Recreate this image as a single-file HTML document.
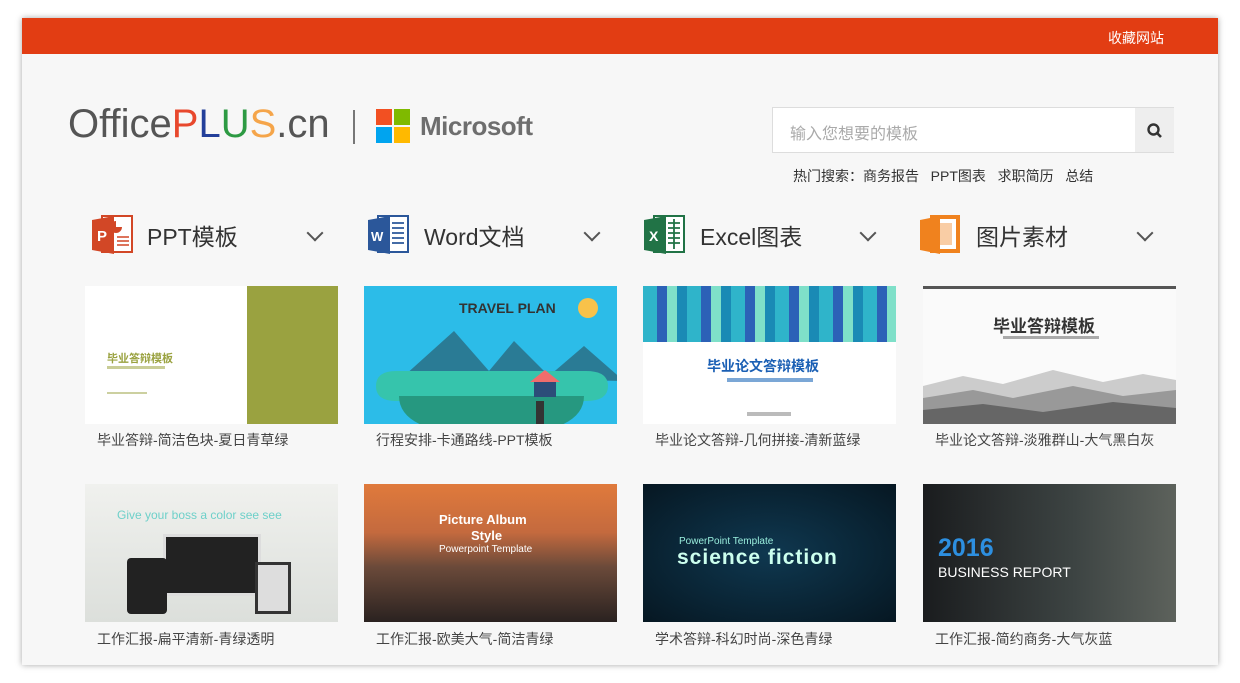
<!DOCTYPE html>
<html><head><meta charset="utf-8"><style>
*{margin:0;padding:0;box-sizing:border-box}
body{width:1240px;height:683px;background:#fff;font-family:"Liberation Sans","Noto Sans CJK SC",sans-serif;position:relative;overflow:hidden}
.card{position:absolute;left:22px;top:18px;width:1196px;height:647px;background:#f7f7f7;box-shadow:0 0 6px rgba(0,0,0,.35)}
.top{position:absolute;left:22px;top:18px;width:1196px;height:36px;background:#e23d13}
.top span{position:absolute;right:54px;top:10px;color:#fff;font-size:14px}
.a{position:absolute}
.th{position:absolute;width:253px;height:138px;overflow:hidden}
.cap{position:absolute;font-size:14px;color:#444;white-space:nowrap}
.nav{position:absolute;font-size:23px;color:#333}
.chev{position:absolute;width:12px;height:12px;border-right:2px solid #555;border-bottom:2px solid #555;transform:rotate(45deg)}
</style></head><body>
<div class="card"></div>
<div class="top"><span>收藏网站</span></div>

<div class="a" style="left:68px;top:102px;font-size:40px;color:#555;font-family:'Liberation Sans',sans-serif">Office<span style="color:#e8482d">P</span><span style="color:#233f9a">L</span><span style="color:#2d9a43">U</span><span style="color:#f5a54a">S</span>.cn</div>
<div class="a" style="left:353px;top:110px;width:2px;height:34px;background:#777"></div>
<div class="a" style="left:376px;top:109px;width:16px;height:16px;background:#f25022"></div>
<div class="a" style="left:394px;top:109px;width:16px;height:16px;background:#7fba00"></div>
<div class="a" style="left:376px;top:127px;width:16px;height:16px;background:#00a4ef"></div>
<div class="a" style="left:394px;top:127px;width:16px;height:16px;background:#ffb900"></div>
<div class="a" style="left:420px;top:111px;font-size:26px;color:#6e6e6e;font-weight:bold;letter-spacing:-0.5px">Microsoft</div>

<div class="a" style="left:772px;top:107px;width:402px;height:46px;background:#fff;border:1px solid #ddd"></div>
<div class="a" style="left:790px;top:120px;font-size:16px;color:#aaa">输入您想要的模板</div>
<div class="a" style="left:1135px;top:108px;width:39px;height:44px;background:#eee"></div>
<svg class="a" style="left:1146px;top:122px" width="18" height="18" viewBox="0 0 18 18"><circle cx="7.5" cy="7.5" r="5" fill="none" stroke="#333" stroke-width="2.4"/><path d="M11 11l4 4" stroke="#333" stroke-width="2.6"/></svg>
<div class="a" style="left:793px;top:166px;font-size:14px;color:#333;white-space:nowrap">热门搜索：商务报告&nbsp;&nbsp; PPT图表&nbsp;&nbsp; 求职简历&nbsp;&nbsp; 总结</div>

<svg class="a" style="left:90px;top:213px" width="44" height="44" viewBox="0 0 44 44"><rect x="12" y="3" width="30" height="36" fill="#fff" stroke="#d24726" stroke-width="2"/><path d="M26 8a6 6 0 1 0 6 6h-6z" fill="#d24726"/><path d="M27 24h12M27 28h12M27 32h12" stroke="#d24726" stroke-width="1.5"/><path d="M2 7l22-4v38l-22-4z" fill="#d24726"/><text x="7" y="28" font-size="15" font-weight="bold" fill="#fff" font-family="Liberation Sans">P</text></svg>
<div class="nav" style="left:147px;top:218px">PPT模板</div>
<div class="chev" style="left:309px;top:227px"></div>

<svg class="a" style="left:366px;top:213px" width="44" height="44" viewBox="0 0 44 44"><rect x="12" y="3" width="30" height="36" fill="#fff" stroke="#2b579a" stroke-width="2"/><path d="M26 10h12M26 15h12M26 20h12M26 25h12M26 30h12" stroke="#2b579a" stroke-width="1.8"/><path d="M2 7l22-4v38l-22-4z" fill="#2b579a"/><text x="5" y="28" font-size="13" font-weight="bold" fill="#fff" font-family="Liberation Sans">W</text></svg>
<div class="nav" style="left:424px;top:218px">Word文档</div>
<div class="chev" style="left:586px;top:227px"></div>

<svg class="a" style="left:642px;top:213px" width="44" height="44" viewBox="0 0 44 44"><rect x="12" y="3" width="30" height="36" fill="#fff" stroke="#217346" stroke-width="2"/><path d="M26 10h12M26 15h12M26 20h12M26 25h12M26 30h12M32 6v30" stroke="#217346" stroke-width="1.8"/><path d="M2 7l22-4v38l-22-4z" fill="#217346"/><text x="7" y="28" font-size="14" font-weight="bold" fill="#fff" font-family="Liberation Sans">X</text></svg>
<div class="nav" style="left:700px;top:218px">Excel图表</div>
<div class="chev" style="left:862px;top:227px"></div>

<svg class="a" style="left:918px;top:213px" width="44" height="44" viewBox="0 0 44 44"><rect x="14" y="4" width="26" height="34" fill="#fff" stroke="#f0821e" stroke-width="4"/><path d="M2 7l20-4v38l-20-4z" fill="#f0821e"/><rect x="18" y="10" width="16" height="22" fill="#f0821e" opacity=".4"/></svg>
<div class="nav" style="left:976px;top:218px">图片素材</div>
<div class="chev" style="left:1139px;top:227px"></div>

<div class="th" style="left:85px;top:286px;background:#fff"><div class="a" style="left:162px;top:0;width:91px;height:138px;background:#9aa240"></div><div class="a" style="left:22px;top:64px;font-size:11px;font-weight:bold;color:#9aa240">毕业答辩模板</div><div class="a" style="left:22px;top:80px;width:58px;height:3px;background:#c9cd96"></div><div class="a" style="left:22px;top:106px;width:40px;height:2px;background:#ccd0a0"></div></div>
<div class="th" style="left:364px;top:286px;background:#2cbce8">
<div class="a" style="left:95px;top:14px;font-size:14px;font-weight:bold;color:#333">TRAVEL PLAN</div>
<div class="a" style="left:214px;top:12px;width:20px;height:20px;border-radius:50%;background:#f8c24a"></div>
<svg class="a" style="left:0;top:40px" width="253" height="98"><path d="M40 50L90 5 125 45 150 15 185 50 220 20 260 55z" fill="#2a7b95"/><path d="M12 60q0-15 20-15h190q22 0 22 15t-22 15H32q-20 0-20-15z" fill="#36c4ac"/><path d="M35 70h185q0 20-25 30H60q-25-10-25-30z" fill="#269880"/><rect x="170" y="55" width="22" height="16" fill="#2c4d79"/><path d="M166 56l15-12 15 12z" fill="#f06c6c"/><rect x="172" y="75" width="8" height="25" fill="#333"/></svg>
</div>
<div class="th" style="left:643px;top:286px;background:#fff">
<div class="a" style="left:0;top:0;width:253px;height:56px;background:repeating-linear-gradient(90deg,#2fb4ca 0 14px,#2c61b7 14px 24px,#7fe0c9 24px 34px,#1a8ab5 34px 44px)"></div>
<div class="a" style="left:64px;top:70px;font-size:14px;font-weight:bold;color:#1a5fb4">毕业论文答辩模板</div>
<div class="a" style="left:84px;top:92px;width:86px;height:4px;background:#7ba7d6"></div>
<div class="a" style="left:104px;top:126px;width:44px;height:4px;background:#bbb"></div>
</div>
<div class="th" style="left:923px;top:286px;background:#fafafa">
<div class="a" style="left:0;top:0;width:253px;height:3px;background:#555"></div>
<div class="a" style="left:70px;top:26px;font-size:17px;font-weight:bold;color:#333">毕业答辩模板</div>
<div class="a" style="left:80px;top:50px;width:96px;height:3px;background:#aaa"></div>
<svg class="a" style="left:0;top:80px" width="253" height="58"><path d="M0 20l40-10 40 8 50-14 50 12 40-8 33 6v44H0z" fill="#ccc"/><path d="M0 32l50-8 40 8 60-12 50 10 53-6v34H0z" fill="#999"/><path d="M0 44l60-6 60 8 70-10 63 6v16H0z" fill="#666"/></svg>
</div>

<div class="cap" style="left:97px;top:430px">毕业答辩-简洁色块-夏日青草绿</div>
<div class="cap" style="left:376px;top:430px">行程安排-卡通路线-PPT模板</div>
<div class="cap" style="left:655px;top:430px">毕业论文答辩-几何拼接-清新蓝绿</div>
<div class="cap" style="left:935px;top:430px">毕业论文答辩-淡雅群山-大气黑白灰</div>

<div class="th" style="left:85px;top:484px;background:linear-gradient(#f0f1ee,#dcdfdb)">
<div class="a" style="left:32px;top:24px;font-size:12px;color:#6ed0c9">Give your boss a color see see</div>
<div class="a" style="left:78px;top:50px;width:98px;height:62px;background:#222;border:3px solid #ddd"></div>
<div class="a" style="left:42px;top:74px;width:40px;height:56px;background:#222;border-radius:4px"></div>
<div class="a" style="left:170px;top:78px;width:36px;height:52px;background:#ddd;border:3px solid #333"></div>
</div>
<div class="th" style="left:364px;top:484px;background:linear-gradient(#e07a3c 0%,#c46a3e 35%,#6b4a3a 60%,#2a2220 100%)">
<div class="a" style="left:75px;top:28px;font-size:13px;font-weight:bold;color:#fff">Picture Album</div>
<div class="a" style="left:107px;top:44px;font-size:13px;font-weight:bold;color:#fff">Style</div>
<div class="a" style="left:75px;top:60px;font-size:10px;color:#fff">Powerpoint Template</div>
</div>
<div class="th" style="left:643px;top:484px;background:radial-gradient(ellipse at 50% 50%,#0f3850,#061722)">
<div class="a" style="left:36px;top:52px;font-size:10px;color:#9ed">PowerPoint Template</div>
<div class="a" style="left:34px;top:62px;font-size:21px;font-weight:bold;color:#cfe;letter-spacing:1px">science fiction</div>
</div>
<div class="th" style="left:923px;top:484px;background:linear-gradient(90deg,#1a1c1e,#3d4443 60%,#5d625c)">
<div class="a" style="left:15px;top:50px;font-size:25px;font-weight:bold;color:#2d8fe0">2016</div>
<div class="a" style="left:15px;top:80px;font-size:14px;color:#fff">BUSINESS REPORT</div>
</div>

<div class="cap" style="left:97px;top:629px">工作汇报-扁平清新-青绿透明</div>
<div class="cap" style="left:376px;top:629px">工作汇报-欧美大气-简洁青绿</div>
<div class="cap" style="left:655px;top:629px">学术答辩-科幻时尚-深色青绿</div>
<div class="cap" style="left:935px;top:629px">工作汇报-简约商务-大气灰蓝</div>
</body></html>
